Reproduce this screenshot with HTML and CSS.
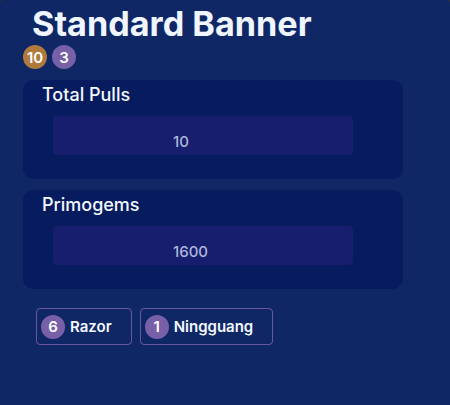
FILE: index.html
```html
<!DOCTYPE html>
<html>
<head>
<meta charset="utf-8">
<link rel="stylesheet" href="styles.css">
</head>
<body>
<div class="page">
  <h1 class="title">Standard Banner</h1>
  <div class="badges">
    <span class="badge gold">10</span>
    <span class="badge purple">3</span>
  </div>
  <div class="card">
    <div class="label">Total Pulls</div>
    <div class="field">10</div>
  </div>
  <div class="card">
    <div class="label">Primogems</div>
    <div class="field">1600</div>
  </div>
  <div class="chips">
    <div class="chip"><span class="badge purple">6</span><span class="name">Razor</span></div>
    <div class="chip"><span class="badge purple">1</span><span class="name">Ningguang</span></div>
  </div>
</div>
</body>
</html>
```
FILE: styles.css
```css
html, body {
  margin: 0;
  padding: 0;
  background: #2a2f3d;
  height: 100%;
}
.page {
  background: #102766;
  min-height: 100%;
  border-radius: 4px 4px 0 0;
  font-family: Inter, "Noto Sans", sans-serif;
  color: #f2f6ff;
  padding: 0 47px 20px 23px;
  box-sizing: border-box;
}
.title {
  margin: 0;
  padding: 4px 0 0 9px;
  font-size: 34.2px;
  font-weight: 700;
  line-height: 40px;
  color: #f0f6ff;
}
.badges {
  display: flex;
  gap: 5px;
  margin-top: 1px;
}
.badge {
  width: 24px;
  height: 24px;
  border-radius: 50%;
  display: inline-flex;
  align-items: center;
  justify-content: center;
  font-size: 15px;
  font-weight: 600;
  color: #ffffff;
}
.gold { background: #b07a3c; }
.purple { background: #7760a8; }
.card {
  background: #061c5e;
  border-radius: 10px;
  margin-top: 11px;
  padding: 3px 0 24px 0;
}
.label {
  font-size: 18px;
  font-weight: 500;
  line-height: 24px;
  padding-left: 19px;
  color: #f4f8ff;
}
.field {
  margin: 9px 0 0 30px;
  width: 300px;
  height: 39px;
  box-sizing: border-box;
  background: #181e6e;
  border-radius: 4px;
  padding-left: 120px;
  padding-top: 11px;
  display: flex;
  align-items: center;
  font-size: 15px;
  font-weight: 500;
  color: #aeb8dc;
}
.chips {
  display: flex;
  gap: 8px;
  margin: 19px 0 0 13px;
}
.chip {
  display: flex;
  align-items: center;
  gap: 5px;
  height: 37px;
  box-sizing: border-box;
  border: 1px solid #6b56a3;
  border-radius: 4px;
  padding: 0 19px 0 4px;
}
.name {
  font-size: 15px;
  font-weight: 600;
  color: #f4f8ff;
}
```
